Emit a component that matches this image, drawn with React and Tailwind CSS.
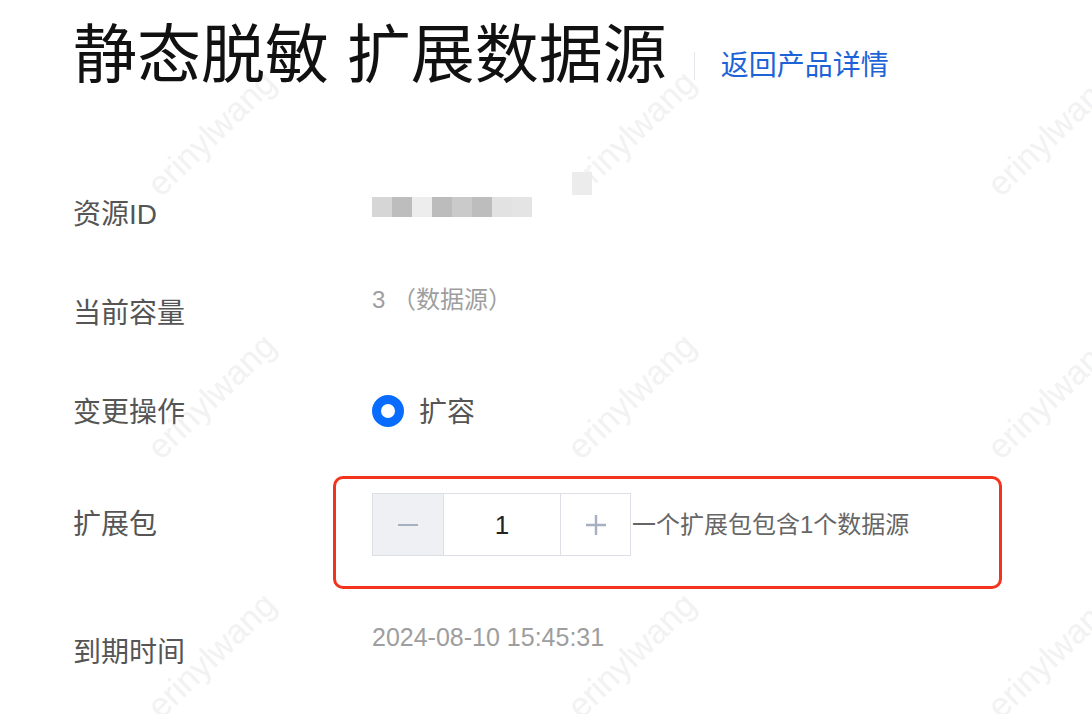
import React from "react";

const FONT = { fontFamily: '"Liberation Sans", "Noto Sans CJK SC", sans-serif' };

function Watermark({ left, top }) {
  return (
    <div
      className="absolute text-[34px] leading-[34px] text-[#f2f2f2] whitespace-nowrap"
      style={{ left, top, transform: "translate(-50%, -50%) rotate(-44deg)" }}
    >
      erinylwang
    </div>
  );
}

export default function App() {
  const marks = [];
  [211, 631, 1051].forEach((x) =>
    [133, 396, 655].forEach((y) => marks.push({ x, y }))
  );
  const blur = ["#d6d6d6", "#bdbdbd", "#ededed", "#bcbcbc", "#cacaca", "#bdbdbd", "#e2e2e2", "#e4e4e4"];
  return (
    <div className="relative w-[1092px] h-[714px] bg-white overflow-hidden" style={FONT}>
      {/* watermark */}
      <div className="absolute inset-0 pointer-events-none">
        {marks.map((m, i) => (
          <Watermark key={i} left={m.x} top={m.y} />
        ))}
      </div>

      {/* header */}
      <div className="relative flex items-start pl-[73px] pt-[23px]">
        <h1 className="text-[64px] leading-[64px] font-normal text-[#111]">静态脱敏 扩展数据源</h1>
        <div className="ml-[27px] mt-[29px] w-px h-[28px] bg-[#e3e6eb]" />
        <a className="ml-[26px] mt-[29px] text-[28px] leading-[28px] text-[#1d63d8]">返回产品详情</a>
      </div>

      {/* form */}
      <div className="absolute left-[73px] top-[190px] flex flex-col">
        {/* row 1 */}
        <div className="flex h-[96px]">
          <div className="w-[260px] pt-[11px] text-[28px] leading-[28px] text-[#555]">资源ID</div>
          <div className="relative pl-[39px] pt-[7px]">
            <div className="flex">
              {blur.map((c, i) => (
                <div key={i} className="w-[20px] h-[20px]" style={{ background: c }} />
              ))}
            </div>
            <div className="absolute left-[239px] top-[-18px] w-[20px] h-[23px] bg-[#ececec]" />
          </div>
        </div>
        {/* row 2 */}
        <div className="flex h-[100px]">
          <div className="w-[260px] pt-[14px] text-[28px] leading-[28px] text-[#555]">当前容量</div>
          <div className="pl-[39px] pt-[2px] text-[24px] leading-[24px] text-[#9e9e9e]">3 （数据源）</div>
        </div>
        {/* row 3 */}
        <div className="flex h-[90px]">
          <div className="w-[260px] pt-[13px] text-[28px] leading-[28px] text-[#555]">变更操作</div>
          <div className="pl-[39px] pt-[9px]">
            <div className="flex items-center h-[32px]">
              <div className="w-[32px] h-[32px] rounded-full border-[9px] border-[#0a6cff] bg-white" />
              <span className="ml-[15px] pt-[3px] text-[28px] leading-[28px] text-[#555]">扩容</span>
            </div>
          </div>
        </div>
        {/* row 4 */}
        <div className="flex h-[113px]">
          <div className="w-[260px] pt-[35px] text-[28px] leading-[28px] text-[#555]">扩展包</div>
          <div className="w-[669px] h-[113px] border-[3px] border-[#f4331d] rounded-[10px] pl-[36px] pt-[14px]">
            <div className="flex items-center">
              <div className="flex h-[63px] border border-[#dcdfe6] bg-white">
                <div className="w-[70px] bg-[#eef0f4] flex items-center justify-center">
                  <div className="w-[20px] h-[2px] bg-[#a6b0c0]" />
                </div>
                <div className="w-[118px] border-l border-r border-[#dcdfe6] flex items-center justify-center text-[26px] leading-[26px] text-[#222]">
                  1
                </div>
                <div className="w-[69px] flex items-center justify-center">
                  <svg width="22" height="22" viewBox="0 0 22 22">
                    <path d="M11 1v20M1 11h20" stroke="#a6b0c0" strokeWidth="2.4" />
                  </svg>
                </div>
              </div>
              <span className="ml-[1px] text-[24px] leading-[24px] text-[#666]">一个扩展包包含1个数据源</span>
            </div>
          </div>
        </div>
        {/* row 5 */}
        <div className="flex h-[125px]">
          <div className="w-[260px] pt-[50px] text-[28px] leading-[28px] text-[#555]">到期时间</div>
          <div className="pl-[39px] pt-[36px] text-[25px] leading-[25px] text-[#9e9e9e]">2024-08-10 15:45:31</div>
        </div>
      </div>
    </div>
  );
}
